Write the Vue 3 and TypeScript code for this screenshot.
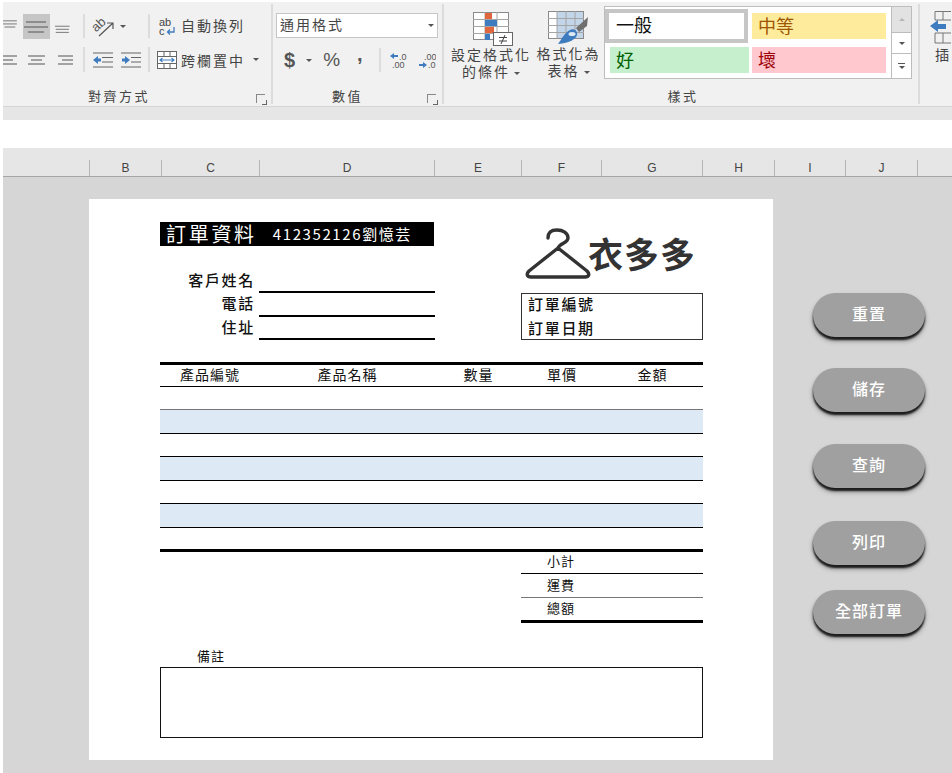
<script setup lang="ts">
const cols = [
  { name: '', w: 87 }, { name: 'B', w: 72 }, { name: 'C', w: 98 }, { name: 'D', w: 175 }, { name: 'E', w: 87 },
  { name: 'F', w: 80 }, { name: 'G', w: 101 }, { name: 'H', w: 72 }, { name: 'I', w: 71 }, { name: 'J', w: 72 }, { name: '', w: 34 },
]
const heads = ['產品編號', '產品名稱', '數量', '單價', '金額']
const rows = [false, true, false, true, false, true]
const totals = ['小計', '運費', '總額']
const buttons = ['重置', '儲存', '查詢', '列印', '全部訂單']

// Alignment glyphs: each line is [x1, x2, y]
const alignTop = [
  { lines: [[0, 18, 2], [0, 18, 6], [2, 16, 10]], cls: 'al top' },
  { lines: [[3, 23, 5], [1, 25, 10], [5, 21, 15]], cls: 'al mid on' },
  { lines: [[0, 19, 9], [1, 18, 13], [1, 18, 17]], cls: 'al bot' },
]
const alignBottom = [
  { lines: [[0, 14, 3], [0, 10, 7], [0, 14, 11]], cls: 'al b1' },
  { lines: [[0, 17, 3], [3, 14, 7], [0, 17, 11]], cls: 'al b2' },
  { lines: [[1, 16, 3], [5, 16, 7], [1, 16, 11]], cls: 'al b3' },
]
</script>

<template>
  <div class="app">
    <div class="ribbon">
      <!-- 對齊方式 -->
      <section class="group g-align">
        <div class="g-body">
          <div class="a-col a1">
            <div class="t-row">
              <span v-for="(a, i) in alignTop" :key="i" :class="a.cls">
                <svg width="26" height="20" viewBox="0 0 26 20"><line v-for="(l, j) in a.lines" :key="j" :x1="l[0]" :x2="l[1]" :y1="l[2]" :y2="l[2]" class="ln" /></svg>
              </span>
            </div>
            <div class="t-row">
              <span v-for="(a, i) in alignBottom" :key="i" :class="a.cls">
                <svg width="18" height="14" viewBox="0 0 18 14"><line v-for="(l, j) in a.lines" :key="j" :x1="l[0]" :x2="l[1]" :y1="l[2]" :y2="l[2]" class="ln" /></svg>
              </span>
            </div>
          </div>
          <i class="vsep"></i>
          <div class="a-col a2">
            <div class="t-row">
              <svg class="orient" width="22" height="24" viewBox="0 0 22 24">
                <text x="0" y="14" transform="rotate(-42 6 12)" class="ab">ab</text>
                <path d="M6 21 L20 8 M14 8 H20 V14" fill="none" stroke="#555" stroke-width="1.2" />
              </svg>
              <b class="caret c-orient"></b>
            </div>
            <div class="t-row indents">
              <svg width="20" height="16" viewBox="0 0 20 16">
                <path d="M0 1H20M9 5.500H20M9 10H20M0 15H20" stroke="#666" stroke-width="1" fill="none" />
                <path d="M0 8 L5 4 V6.500 H8 V9.500 H5 V12 Z" fill="#3f7cbf" />
              </svg>
              <svg width="20" height="16" viewBox="0 0 20 16">
                <path d="M0 1H20M10 5.500H20M10 10H20M0 15H20" stroke="#666" stroke-width="1" fill="none" />
                <path d="M9 8 L4 4 V6.500 H1 V9.500 H4 V12 Z" fill="#3f7cbf" />
              </svg>
            </div>
          </div>
          <i class="vsep"></i>
          <div class="a-col a3">
            <div class="t-row wrap-row">
              <svg width="18" height="20" viewBox="0 0 18 20">
                <text x="0" y="9" class="ab2">ab</text>
                <text x="0" y="18" class="ab2">c</text>
                <path d="M15 10 V15 H9 M11 12.500 L8.500 15 L11 17.500" fill="none" stroke="#3f7cbf" stroke-width="1.300" />
              </svg>
              <span class="rt raised">自動換列</span>
            </div>
            <div class="t-row merge-row">
              <svg width="20" height="18" viewBox="0 0 20 18">
                <rect x=".5" y=".5" width="19" height="17" fill="#fff" stroke="#666" />
                <path d="M0 5.500H20M0 12.500H20M7 0V5M13 0V5M7 13V18M13 13V18" stroke="#666" fill="none" />
                <path d="M3 9H17M5.500 7L3 9L5.500 11M14.500 7L17 9L14.500 11" stroke="#3f7cbf" fill="none" stroke-width="1.100" />
              </svg>
              <span class="rt">跨欄置中</span>
              <b class="caret c-merge"></b>
            </div>
          </div>
        </div>
        <div class="g-label l-align">對齊方式<i class="launch"></i></div>
      </section>

      <!-- 數值 -->
      <section class="group g-num">
        <div class="select"><span class="raised">通用格式</span><b class="caret"></b></div>
        <div class="num-row">
          <span class="dollar">$</span>
          <b class="caret c-d"></b>
          <span class="pct">%</span>
          <span class="comma">,</span>
          <i class="vsep short"></i>
          <svg width="17" height="17" viewBox="0 0 17 17" class="dec d1">
            <path d="M0 4 L4 1 V3 H8 V5 H4 V7 Z" fill="#3f7cbf" />
            <text x="9" y="7.500" class="dt">.0</text><text x="2" y="15.500" class="dt">.00</text>
          </svg>
          <svg width="18" height="17" viewBox="0 0 18 17" class="dec d2">
            <text x="6" y="7.500" class="dt">.00</text>
            <path d="M9 13 L5 10 V12 H1 V14 H5 V16 Z" fill="#3f7cbf" /><text x="10" y="15.500" class="dt">.0</text>
          </svg>
        </div>
        <div class="g-label l-num">數值<i class="launch"></i></div>
      </section>

      <!-- 樣式 -->
      <section class="group g-style">
        <div class="g-body style-body">
          <div class="big b-cf">
            <svg width="40" height="36" viewBox="0 0 40 36">
              <rect x=".5" y=".5" width="35" height="27" fill="#fff" stroke="#8a8a8a" />
              <path d="M0 7.500H36M0 14.500H36M0 21.500H36M12 0V28M24 0V28" stroke="#a5a5a5" fill="none" />
              <rect x="12" y="1" width="7" height="6" fill="#e0663e" />
              <rect x="12" y="8" width="12" height="6" fill="#3f7cbf" />
              <rect x="12" y="15" width="9" height="6" fill="#e0663e" />
              <rect x="12" y="22" width="5" height="6" fill="#3f7cbf" />
              <rect x="20.500" y="20.500" width="19" height="13" fill="#fff" stroke="#666" />
              <path d="M26 25.500H34M26 29H34M32 23L28 32" stroke="#444" fill="none" />
            </svg>
            <div class="big-t">設定格式化</div>
            <div class="big-t">的條件<b class="caret"></b></div>
          </div>
          <div class="big b-wt">
            <svg width="42" height="36" viewBox="0 0 42 36">
              <rect x=".5" y=".5" width="35" height="27" fill="#fff" stroke="#8a8a8a" />
              <rect x="9" y="1" width="26" height="26" fill="#c3d5e9" />
              <path d="M0 7.500H36M0 14.500H36M0 21.500H36M9 0V28M18 0V28M27 0V28" stroke="#a5a5a5" fill="none" />
              <path d="M28 17 L40 6 L39 15 L31 21 Z" fill="#6f6f6f" />
              <path d="M10 33 C13 29 17 21 22 19 C26 17 30 20 29 24 C28 28 22 32 10 33 Z" fill="#3f7cbf" />
              <ellipse cx="24" cy="23" rx="3.500" ry="2" fill="#dfe9f4" />
            </svg>
            <div class="big-t">格式化為</div>
            <div class="big-t">表格<b class="caret"></b></div>
          </div>
          <div class="gallery">
            <div class="cells">
              <div class="cell plain">一般</div>
              <div class="cell mid">中等</div>
              <div class="cell good">好</div>
              <div class="cell bad">壞</div>
            </div>
            <div class="scroll">
              <div class="s-btn s-up"><b class="up"></b></div>
              <div class="s-btn s-md"><b class="caret"></b></div>
              <div class="s-btn s-more"><i></i><b class="caret"></b></div>
            </div>
          </div>
        </div>
        <div class="g-label l-style">樣式</div>
      </section>

      <!-- 插入 -->
      <section class="group g-ins">
        <svg width="21" height="33" viewBox="0 0 21 33">
          <path d="M5 .5H21M5 .5V9M13 .5V9M5 9H21M5 22H21M5 32H21M5 22V32M13 22V32" stroke="#777" fill="none" />
          <path d="M0 15 L8 9 V13 H16 V18 H8 V21 Z" fill="#3f7cbf" />
        </svg>
        <div class="big-t ins-t">插</div>
      </section>
    </div>

    <div class="strip"></div>
    <div class="formula"></div>

    <div class="colhead">
      <div v-for="(c, i) in cols" :key="i" class="col" :style="{ width: c.w + 'px' }">{{ c.name }}</div>
    </div>

    <main class="sheet">
      <article class="page">
        <div class="top">
          <div class="customer">
            <div class="title"><span class="t-main">訂單資料</span><span class="t-sub">412352126劉憶芸</span></div>
            <div class="field"><label>客戶姓名</label><span></span></div>
            <div class="field"><label>電話</label><span></span></div>
            <div class="field"><label>住址</label><span></span></div>
          </div>
          <div class="order">
            <div class="logo">
              <svg width="66" height="51" viewBox="0 0 66 51">
                <path d="M23 10 C23 4 27 2 32 2 C38 2 43 5 43 10 C43 15 35 15 33 20 M33 20 L4 43 C1 46 2 49 6 49 L60 49 C64 49 65 46 62 43 Z" fill="none" stroke="#333" stroke-width="3.400" stroke-linejoin="round" stroke-linecap="round" />
              </svg>
              <span>衣多多</span>
            </div>
            <div class="order-box">
              <div>訂單編號</div>
              <div>訂單日期</div>
            </div>
          </div>
        </div>

        <div class="table">
          <div class="thead">
            <div v-for="h in heads" :key="h">{{ h }}</div>
          </div>
          <div v-for="(blue, i) in rows" :key="i" class="trow" :class="[blue ? 'blue' : 'white', i === 0 ? 'first' : '']"></div>
          <div class="tlast"></div>
        </div>

        <div class="totals">
          <div v-for="t in totals" :key="t" class="total">{{ t }}</div>
        </div>

        <div class="note-label">備註</div>
        <div class="note"></div>
      </article>

      <aside class="actions">
        <button v-for="b in buttons" :key="b" class="act" type="button">{{ b }}</button>
      </aside>
    </main>
  </div>
</template>

<style scoped>
.app {
  width: 952px;
  height: 773px;
  padding-left: 3px;
  box-sizing: border-box;
  background: #fff;
  display: flex;
  flex-direction: column;
  overflow: hidden;
  font-family: "Noto Sans CJK TC", "Liberation Sans", sans-serif;
  color: #111;
}
.ribbon {
  height: 104px;
  margin-top: 2px;
  flex: none;
  display: flex;
  background: #f1f1f1;
  border-bottom: 1px solid #d4d4d4;
  color: #444;
}
.group {
  position: relative;
  flex: none;
  height: 100px;
  box-sizing: border-box;
  border-right: 2px solid #dcdcdc;
  margin-top: 2px;
}
.g-align { width: 270px; }
.g-num { width: 171px; }
.g-style { width: 476px; }
.g-ins { width: 32px; border-right: 0; padding: 7px 0 0 8px; }
.g-body { display: flex; height: 82px; }
.g-label {
  position: absolute;
  left: 0;
  right: 0;
  top: 83px;
  text-align: center;
  font-size: 13px;
  line-height: 18px;
  letter-spacing: 2.500px;
}
.l-align { padding-right: 36px; box-sizing: border-box; }
.l-num { padding-right: 20px; box-sizing: border-box; }
.l-style { padding-left: 4px; box-sizing: border-box; }
.launch {
  position: absolute;
  right: 6px;
  top: 7px;
  width: 8px;
  height: 8px;
  border-left: 1px solid #888;
  border-top: 1px solid #888;
}
.launch::after {
  content: "";
  position: absolute;
  right: -2px;
  bottom: -2px;
  width: 4px;
  height: 4px;
  border-right: 1px solid #666;
  border-bottom: 1px solid #666;
}
.a-col { display: flex; flex-direction: column; padding-top: 10px; box-sizing: border-box; }
.t-row { display: flex; align-items: center; height: 25px; margin-bottom: 8px; }
.a1 { width: 80px; }
.a2 { width: 63px; padding-left: 8px; }
.a3 { flex: 1; padding-left: 7px; }
.orient { overflow: visible; }
.vsep { flex: none; width: 2px; height: 24px; background: #dcdcdc; margin-top: 10px; }
.g-body > .vsep { height: 58px; background: linear-gradient(#dcdcdc 0 24px, transparent 24px 33px, #dcdcdc 33px); }
.ln { stroke: #555; stroke-width: 1; }
.al { display: flex; }
.al.top { width: 20px; }
.al.top svg, .al.bot svg { width: 20px; }
.al.mid { width: 27px; height: 25px; margin: 0 5px 0 0; align-items: center; }
.al.on { background: #c6c6c6; }
.al.bot { width: 22px; }
.al.b1 { width: 25px; }
.al.b2 { width: 29px; }
.al.b3 { width: 20px; }
.caret {
  display: inline-block;
  width: 0;
  height: 0;
  border-left: 3.500px solid transparent;
  border-right: 3.500px solid transparent;
  border-top: 3.500px solid #555;
}
.c-orient { margin-left: 5px; }
.indents { gap: 8px; }
.ab { font: 13px "Liberation Sans", sans-serif; fill: #555; }
.ab2 { font: 11px "Liberation Sans", sans-serif; fill: #444; }
.rt { font-size: 14px; letter-spacing: 2px; line-height: 20px; }
.raised { padding-bottom: 4px; }
.wrap-row svg { margin: 0 4px 0 2px; }
.merge-row svg { margin-right: 4px; }
.c-merge { margin-left: 8px; }

.g-num { padding: 9px 0 0 3px; }
.select {
  width: 162px;
  height: 25px;
  box-sizing: border-box;
  background: #fff;
  border: 1px solid #c6c6c6;
  display: flex;
  align-items: center;
  justify-content: space-between;
  padding: 0 3px 0 3px;
  font-size: 14px;
  letter-spacing: 2px;
}
.num-row { display: flex; align-items: center; height: 24px; margin-top: 10px; }
.dollar { font: 700 20px "Liberation Sans", sans-serif; color: #555; margin-left: 8px; }
.c-d { margin-left: 11px; }
.pct { font: 400 19px "Liberation Sans", sans-serif; color: #555; margin-left: 11px; }
.comma { font: 700 20px "Liberation Sans", sans-serif; color: #555; margin-left: 17px; position: relative; top: -6px; }
.num-row .short { margin: 0 0 0 16px; }
.dec.d1 { margin-left: 9px; }
.dec.d2 { margin-left: 11px; }
.dt { font: 9px "Liberation Sans", sans-serif; fill: #555; }

.big { flex: none; display: flex; flex-direction: column; align-items: center; }
.b-cf { width: 89px; padding: 8px 0 0 5px; box-sizing: border-box; }
.b-wt { width: 71px; padding-top: 7px; box-sizing: border-box; }
.big svg { display: block; margin-bottom: -2px; height: 36px; }
.b-cf svg { margin-left: 4px; }
.big-t { font-size: 14px; letter-spacing: 2px; line-height: 17px; white-space: nowrap; }
.big-t .caret { margin-left: 4px; vertical-align: middle; }
.gallery {
  flex: none;
  width: 308px;
  height: 73px;
  box-sizing: border-box;
  margin-top: 2px;
  background: #fff;
  border: 1px solid #bdbdbd;
  display: flex;
}
.cells {
  flex: none;
  width: 287px;
  display: grid;
  grid-template-columns: 146px 134px;
  grid-template-rows: 34px 26px;
  column-gap: 1px;
  row-gap: 4px;
  padding: 2px 0 0 0;
  border-right: 1px solid #bdbdbd;
  box-sizing: border-box;
}
.cell { font-size: 18px; line-height: 24px; padding-left: 6px; }
.cell.plain {
  border: 4px solid #c6c6c6;
  box-sizing: border-box;
  color: #111;
  padding-left: 7px;
  line-height: 22px;
  width: 143px;
}
.cell.mid { background: #ffeb9c; color: #9c5700; margin-top: 4px; height: 26px; padding-left: 6px; }
.cell.good { background: #c6efce; color: #006100; margin-left: 5px; width: 133px; }
.cell.bad { background: #ffc7ce; color: #9c0006; }
.scroll { flex: none; width: 19px; display: flex; flex-direction: column; margin-left: auto; }
.s-btn { display: flex; flex-direction: column; align-items: center; justify-content: center; gap: 2px; border-bottom: 1px solid #bdbdbd; }
.s-up { height: 25px; background: #e2e2e2; }
.s-md { height: 20px; }
.s-more { flex: 1; border-bottom: 0; }
.s-more i { width: 7px; height: 1px; background: #555; }
.up { width: 0; height: 0; border-left: 3.500px solid transparent; border-right: 3.500px solid transparent; border-bottom: 3.500px solid #b5b5b5; }
.ins-t { margin: -3px 0 0 7px; }
.g-ins svg { margin-left: 2px; }

.strip { height: 13px; flex: none; background: #e6e6e6; }
.formula { height: 28px; flex: none; background: #fff; }
.colhead {
  height: 29px;
  flex: none;
  display: flex;
  background: #e6e6e6;
  border-bottom: 1px solid #a6a6a6;
  box-sizing: border-box;
}
.col {
  flex: none;
  box-sizing: border-box;
  text-align: center;
  font: 12px/16px "Liberation Sans", sans-serif;
  color: #444;
  margin-top: 12px;
  height: 16px;
  border-right: 1px solid #b5b5b5;
}
.col:last-child { border-right: 0; }

.sheet {
  flex: 1;
  min-height: 0;
  display: flex;
  padding: 22px 0 13px 86px;
  background: #d6d6d6;
  box-sizing: border-box;
}
.page {
  flex: none;
  width: 684px;
  box-sizing: border-box;
  padding: 23px 70px 0 71px;
  background: #fff;
}
.top { display: flex; }
.customer { width: 275px; flex: none; }
.title {
  height: 24px;
  width: 274px;
  display: flex;
  align-items: center;
  background: #000;
  color: #fff;
  padding-left: 6px;
  box-sizing: border-box;
  margin-bottom: 24px;
  white-space: nowrap;
}
.t-main { font-size: 20px; letter-spacing: 2.700px; line-height: 24px; }
.t-sub { font-size: 15px; margin-left: 16px; letter-spacing: 1.600px; line-height: 24px; }
.field { display: grid; grid-template-columns: 95px 1fr; column-gap: 4px; height: 23.300px; }
.field label { text-align: right; font-size: 15px; letter-spacing: 1.700px; line-height: 20px; font-weight: 500; }
.field span { border-bottom: 2px solid #000; }
.order { margin-left: 86px; width: 182px; flex: none; }
.logo { display: flex; align-items: flex-end; height: 71px; box-sizing: border-box; padding: 5px 0 14px 4px; }
.logo svg { flex: none; }
.logo span { margin: 0 0 9px -3px; font-size: 35px; line-height: 34px; font-weight: 700; letter-spacing: 1px; color: #333; white-space: nowrap; }
.order-box { height: 47px; box-sizing: border-box; border: 1px solid #333; padding-left: 6px; font-size: 15px; letter-spacing: 1.700px; font-weight: 500; line-height: 20px; }
.order-box div { height: 23.500px; }
.table { margin-top: 22px; border-top: 3px solid #000; }
.thead {
  display: grid;
  grid-template-columns: 100px 175px 87px 80px 101px;
  height: 22px;
  box-sizing: border-box;
  border-bottom: 1px solid #000;
  text-align: center;
  font-size: 14px;
  line-height: 18px;
  letter-spacing: 1px;
}
.trow { box-sizing: border-box; border-bottom: 1px solid #000; }
.trow.white { height: 23px; }
.trow.first { border-bottom-color: #777; }
.trow.blue { height: 24px; background: #ddeaf5; }
.tlast { border-bottom: 3px solid #000; height: 24px; box-sizing: border-box; }
.totals { margin-left: 361px; }
.total { height: 22px; box-sizing: border-box; border-bottom: 1px solid #000; padding-left: 26px; font-size: 13px; line-height: 17px; letter-spacing: 1px; }
.total:nth-child(2) { height: 24px; border-bottom-color: #777; line-height: 22px; }
.total:nth-child(3) { height: 25px; border-bottom: 3px solid #000; line-height: 19px; }
.note-label { margin: 23px 0 0 37px; height: 21px; font-size: 13px; line-height: 20px; letter-spacing: 1px; }
.note { height: 71px; box-sizing: border-box; border: 1px solid #111; }
.actions { flex: none; display: flex; flex-direction: column; margin-left: 40px; padding-top: 94px; }
.act {
  width: 112px;
  height: 44px;
  border: 0;
  padding: 0 0 5px;
  border-radius: 22px;
  background: #a0a0a0;
  color: #fff;
  font: 500 16px "Noto Sans CJK TC", sans-serif;
  letter-spacing: 1px;
  box-shadow: 0 3px 2px #1c1c1c, 0 4px 5px rgba(0, 0, 0, 0.35);
}
.act:nth-child(2) { margin-top: 31px; }
.act:nth-child(3) { margin-top: 32px; }
.act:nth-child(4) { margin-top: 33px; }
.act:nth-child(5) { margin-top: 25px; }
</style>
